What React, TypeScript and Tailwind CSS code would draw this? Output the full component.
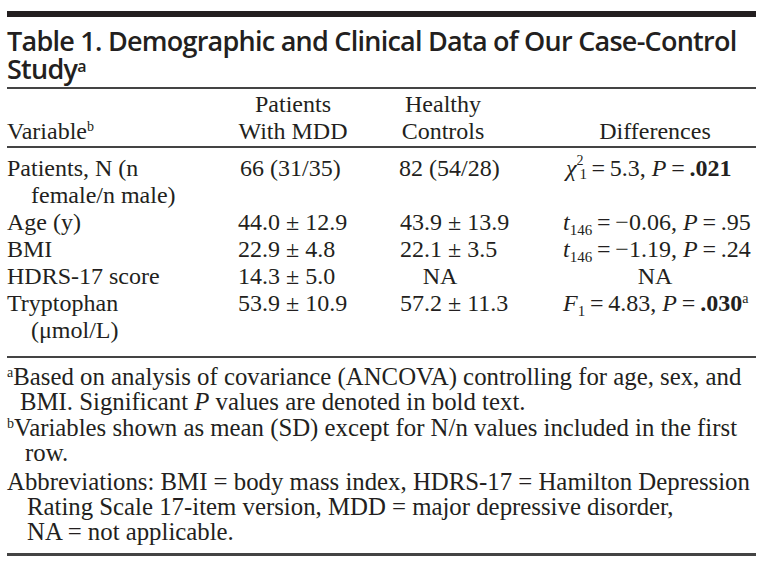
import React from "react";

const serif = { fontFamily: '"Liberation Serif", "Times New Roman", serif' };

function Sup({ children }: { children: React.ReactNode }) {
  return <sup className="text-[14px] -top-[0.55em]">{children}</sup>;
}
function Sub({ children }: { children: React.ReactNode }) {
  return <sub className="text-[15px] -bottom-[0.3em]">{children}</sub>;
}

const T = "\u2009";

export default function App() {
  const cell2 = "pl-[7px]";
  const cell3 = "pl-[45px]";
  const cell4 = "pl-[32px]";
  return (
    <div className="w-[768px] h-[568px] bg-white text-[#231f20] pt-[11px] pl-[7px] pr-[12px] overflow-hidden">
      <div className="h-[6px] bg-[#231f20]" />
      <h1
        className="mt-[10px] text-[27px] leading-[28px] font-semibold whitespace-nowrap tracking-[-0.75px]"
        style={{ fontFamily: '"Open Sans", sans-serif' }}
      >
        Table 1. Demographic and Clinical Data of Our Case-Control
        <br />
        Study<sup className="text-[16px] -top-[0.45em] font-semibold tracking-normal">a</sup>
      </h1>
      <div className="mt-[4px] h-[2px] bg-[#444]" />

      <div className="grid grid-cols-[224px_124px_176px_225px] text-[24px] leading-[27px]" style={serif}>
        {/* header */}
        <div className="self-end pt-[2px]">
          Variable<Sup>b</Sup>
        </div>
        <div className="text-center pt-[2px]">
          Patients
          <br />
          With MDD
        </div>
        <div className="text-center pt-[2px]">
          Healthy
          <br />
          Controls
        </div>
        <div className="self-end text-center pl-[23px]">Differences</div>

        <div className="col-span-4 h-[2px] bg-[#444] mt-[1px] mb-[7px]" />

        {/* Patients row */}
        <div className="pl-[24px] -indent-[24px]">
          Patients, N (n
          <br />
          female/n male)
        </div>
        <div className="pl-[9px]">66 (31/35)</div>
        <div className="pl-[44px]">82 (54/28)</div>
        <div className="pl-[35px] whitespace-nowrap">
          <i>χ</i>
          <span className="relative inline-block w-[10px] h-[1px]">
            <span className="absolute left-0 -top-[21px] text-[14px] leading-none">2</span>
            <span className="absolute left-[3px] -top-[8px] text-[15px] leading-none">1</span>
          </span>
          {T}={T}5.3, <i>P</i>{T}={T}<b>.021</b>
        </div>

        {/* Age */}
        <div>Age (y)</div>
        <div className={cell2}>44.0 ± 12.9</div>
        <div className={cell3}>43.9 ± 13.9</div>
        <div className={cell4 + " whitespace-nowrap"}>
          <i>t</i>
          <Sub>146</Sub>{T}={T}−0.06, <i>P</i>{T}={T}.95
        </div>

        {/* BMI */}
        <div>BMI</div>
        <div className={cell2}>22.9 ± 4.8</div>
        <div className={cell3}>22.1 ± 3.5</div>
        <div className={cell4 + " whitespace-nowrap"}>
          <i>t</i>
          <Sub>146</Sub>{T}={T}−1.19, <i>P</i>{T}={T}.24
        </div>

        {/* HDRS */}
        <div>HDRS-17 score</div>
        <div className={cell2}>14.3 ± 5.0</div>
        <div className="text-center pr-[6px]">NA</div>
        <div className="text-center pl-[23px]">NA</div>

        {/* Tryptophan */}
        <div className="pl-[24px] -indent-[24px]">
          Tryptophan
          <br />
          (μmol/L)
        </div>
        <div className={cell2}>53.9 ± 10.9</div>
        <div className={cell3}>57.2 ± 11.3</div>
        <div className={cell4 + " whitespace-nowrap"}>
          <i>F</i>
          <Sub>1</Sub>{T}={T}4.83, <i>P</i>{T}={T}<b>.030</b>
          <Sup>a</Sup>
        </div>

        <div className="col-span-4 h-[2px] bg-[#444] mt-[12px]" />
      </div>

      <div className="pt-[6px] text-[24.8px] leading-[25px] whitespace-nowrap" style={serif}>
        <p className="pl-[13px] -indent-[13px]">
          <Sup>a</Sup>Based on analysis of covariance (ANCOVA) controlling for age, sex, and
          <br />
          BMI. Significant <i>P</i> values are denoted in bold text.
        </p>
        <p className="mt-[1px] pl-[18px] -indent-[18px]">
          <Sup>b</Sup>Variables shown as mean (SD) except for N/n values included in the first
          <br />
          row.
        </p>
        <p className="mt-[4px] pl-[20px] -indent-[20px]">
          Abbreviations: BMI = body mass index, HDRS-17 = Hamilton Depression
          <br />
          Rating Scale 17-item version, MDD = major depressive disorder,
          <br />
          NA = not applicable.
        </p>
      </div>
      <div className="mt-[9px] h-[3px] bg-[#444]" />
    </div>
  );
}
